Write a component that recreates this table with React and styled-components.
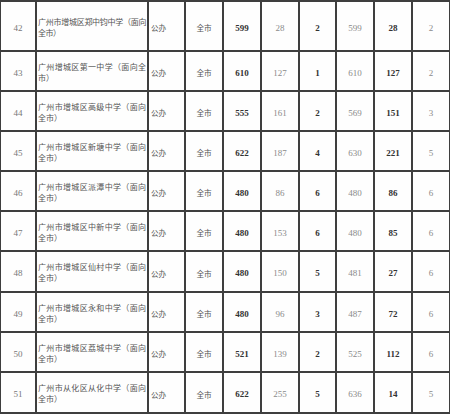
import React from "react";
import styled, { createGlobalStyle } from "styled-components";

const Global = createGlobalStyle`
  html, body { margin: 0; padding: 0; background: #fff; overflow: hidden; }
  #root { width: 450px; height: 414px; overflow: hidden; }
`;

const Grid = styled.div`
  display: grid;
  width: 452px;
  grid-template-columns: 36px 112px 37px 38px 38px 38px 37px 38px 38px 38px;
  border-top: 2px solid #3e3e3e;
  border-left: 1px solid #3e3e3e;
  background: #fff;
`;

const Cell = styled.div`
  box-sizing: border-box;
  height: ${(p) => p.$h}px;
  border-right: 2px solid #3e3e3e;
  border-bottom: 2px solid #3e3e3e;
  display: flex;
  align-items: center;
  justify-content: ${(p) => (p.$left ? "flex-start" : "center")};
  padding: 3px ${(p) => (p.$left ? "1px" : "0")} 0;
  background: #fefefe;
`;

const Num = styled.span`
  font-family: "Liberation Serif", "DejaVu Serif", serif;
  font-size: 9px;
  font-weight: ${(p) => (p.$bold ? 700 : 400)};
  color: ${(p) => (p.$bold ? "#333" : "#8a8a8a")};
`;

const Index = styled.span`
  font-family: "Liberation Serif", "DejaVu Serif", serif;
  font-size: 9px;
  color: #777;
`;

const Name = styled.div`
  width: 108px;
  font-family: "Noto Sans CJK SC", "Noto Sans", sans-serif;
  font-size: 8px;
  letter-spacing: ${(p) => (p.$tight ? "-0.5px" : "0")};
  line-height: 10.7px;
  color: #555;
  text-align: justify;
  text-align-last: left;
`;

const Cjk = styled.span`
  font-family: "Noto Sans CJK SC", "Noto Sans", sans-serif;
  font-size: 7.6px;
  color: #555;
  margin-left: ${(p) => (p.$left ? "1px" : "0")};
`;

const rows = [
  [42, "广州市增城区郑中钧中学（面向全市）", 599, 28, 2, 599, 28, 2],
  [43, "广州增城区第一中学（面向全市）", 610, 127, 1, 610, 127, 2],
  [44, "广州市增城区高级中学（面向全市）", 555, 161, 2, 569, 151, 3],
  [45, "广州市增城区新塘中学（面向全市）", 622, 187, 4, 630, 221, 5],
  [46, "广州市增城区派潭中学（面向全市）", 480, 86, 6, 480, 86, 6],
  [47, "广州市增城区中新中学（面向全市）", 480, 153, 6, 480, 85, 6],
  [48, "广州市增城区仙村中学（面向全市）", 480, 150, 5, 481, 27, 6],
  [49, "广州市增城区永和中学（面向全市）", 480, 96, 3, 487, 72, 6],
  [50, "广州市增城区荔城中学（面向全市）", 521, 139, 2, 525, 112, 6],
  [51, "广州市从化区从化中学（面向全市）", 622, 255, 5, 636, 14, 5],
];

const heights = [50, 40, 40, 40, 40, 40, 41, 40, 40, 41];

export default function App() {
  return (
    <>
      <Global />
      <Grid>
        {rows.map((r, i) => {
          const h = heights[i];
          const [idx, name, ...nums] = r;
          return (
            <React.Fragment key={idx}>
              <Cell $h={h}>
                <Index>{idx}</Index>
              </Cell>
              <Cell $h={h} $left>
                <Name $tight={i === 0}>{name}</Name>
              </Cell>
              <Cell $h={h} $left>
                <Cjk $left>公办</Cjk>
              </Cell>
              <Cell $h={h}>
                <Cjk>全市</Cjk>
              </Cell>
              {nums.map((n, j) => (
                <Cell $h={h} key={j}>
                  <Num $bold={j % 2 === 0}>{n}</Num>
                </Cell>
              ))}
            </React.Fragment>
          );
        })}
      </Grid>
    </>
  );
}
